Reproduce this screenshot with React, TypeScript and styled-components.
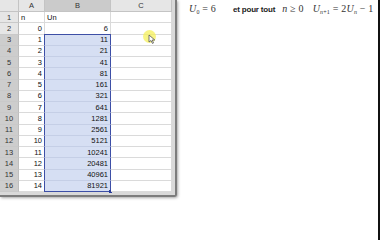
import React from 'react'
import styled, { createGlobalStyle } from 'styled-components'

const GlobalStyle = createGlobalStyle`
  html, body {
    margin: 0;
    padding: 0;
    background: #ffffff;
  }
  body {
    font-family: "Liberation Sans", Arial, sans-serif;
  }
`

const values: number[] = [6, 11, 21, 41, 81, 161, 321, 641, 1281, 2561, 5121, 10241, 20481, 40961, 81921]

const App = () => {
  return (
    <Page>
      <GlobalStyle />
      <Window>
        <Sheet>
          <Corner />
          <ColHead>A</ColHead>
          <ColHead selected>B</ColHead>
          <ColHead>C</ColHead>

          <RowHead>1</RowHead>
          <Cell align="left">n</Cell>
          <Cell align="left">Un</Cell>
          <Cell />

          {values.map((v, i) => {
            const row = i + 2
            const sel = row >= 3
            return (
              <React.Fragment key={row}>
                <RowHead selected={sel}>{row}</RowHead>
                <Cell>{i}</Cell>
                <Cell selected={sel} first={row === 3} last={row === 16}>
                  {v}
                  {row === 16 && <FillHandle />}
                </Cell>
                <Cell />
              </React.Fragment>
            )
          })}
        </Sheet>
        <Highlight>
          <svg width="8" height="10" viewBox="0 0 8 10">
            <path d="M1 1 L1 8 L3 6.5 L4.5 9.5 L5.5 9 L4.2 6 L6.8 6 Z" fill="#fff" stroke="#555" strokeWidth="0.8" />
          </svg>
        </Highlight>
      </Window>

      <Formulas>
        <Math>
          <I>U</I><Sub>0</Sub> = 6
        </Math>
        <Words>et pour tout</Words>
        <Math>
          <I>n</I> ≥ 0
        </Math>
        <Math>
          <I>U</I><Sub><I>n</I>+1</Sub> = 2<I>U</I><Sub><I>n</I></Sub> − 1
        </Math>
      </Formulas>
      <Divider />
      <Edge />
    </Page>
  )
}

export default App

const Page = styled.div`
  display: flex;
  width: 381px;
  height: 240px;
  overflow: hidden;
  background: #fff;
`

const Window = styled.div`
  position: relative;
  flex: none;
  align-self: flex-start;
  background: #d9d9d9;
  padding: 0 3px 3px 0;
  border-right: 2px solid #7c7c7c;
  border-bottom: 2px solid #7c7c7c;
  border-bottom-right-radius: 3px;
  box-shadow: 1px 1px 3px rgba(0, 0, 0, 0.35);
`

const Sheet = styled.div`
  display: grid;
  grid-template-columns: 19px 26px 66px 61px;
  grid-template-rows: 12px repeat(16, 11.25px);
  width: 172px;
  background: #fff;
  font-size: 7.5px;
  color: #111;
`

const Corner = styled.div`
  background: #e6e6e6;
  border-right: 1px solid #c4c4c4;
  border-bottom: 1px solid #c4c4c4;
`

const ColHead = styled.div<{ selected?: boolean }>`
  display: flex;
  align-items: center;
  justify-content: center;
  background: ${p => (p.selected ? '#cbcbcb' : '#e6e6e6')};
  border-right: 1px solid #c4c4c4;
  border-bottom: 1px solid #c4c4c4;
  color: #333;
`

const RowHead = styled.div<{ selected?: boolean }>`
  display: flex;
  align-items: center;
  justify-content: center;
  background: ${p => (p.selected ? '#cdcdcd' : '#e6e6e6')};
  border-right: 1px solid #bdbdbd;
  border-bottom: 1px solid #c9c9c9;
  color: #333;
`

const Cell = styled.div<{ align?: 'left' | 'right'; selected?: boolean; first?: boolean; last?: boolean }>`
  position: relative;
  display: flex;
  align-items: center;
  justify-content: ${p => (p.align === 'left' ? 'flex-start' : 'flex-end')};
  padding: 0 2px;
  box-sizing: border-box;
  background: ${p => (p.selected ? '#d6dff3' : '#fff')};
  border-right: 1px solid ${p => (p.selected ? '#3d4fa6' : '#dadada')};
  border-bottom: 1px solid ${p => (p.selected && !p.last ? '#c5cfe6' : p.last ? '#3d4fa6' : '#dadada')};
  ${p => (p.selected ? 'border-left: 1px solid #3d4fa6;' : '')}
  ${p => (p.first ? 'border-top: 1px solid #3d4fa6;' : '')}
  ${p => (p.first ? 'margin-top: -1px;' : '')}
  ${p => (p.selected ? 'margin-left: -1px;' : '')}
`

const FillHandle = styled.span`
  position: absolute;
  right: -2px;
  bottom: -2px;
  width: 3px;
  height: 3px;
  background: #2a3d9a;
`

const Highlight = styled.div`
  position: absolute;
  left: 143px;
  top: 30px;
  width: 13px;
  height: 13px;
  border-radius: 50%;
  background: rgba(246, 240, 90, 0.75);
  & svg {
    position: absolute;
    left: 5px;
    top: 4px;
  }
`

const Formulas = styled.div`
  flex: 1;
  display: flex;
  align-items: baseline;
  align-self: flex-start;
  padding: 3px 0 0 12px;
  gap: 0;
  font-family: "Liberation Serif", "Times New Roman", serif;
  font-size: 10px;
  color: #333;
  white-space: nowrap;

  & > :nth-child(1) { margin-right: 17px; }
  & > :nth-child(2) { margin-right: 7px; }
  & > :nth-child(3) { margin-right: 9px; }
`

const Math = styled.span`
  letter-spacing: 0.2px;
`

const I = styled.i`
  font-style: italic;
`

const Sub = styled.sub`
  font-size: 6px;
  vertical-align: -2px;
  line-height: 0;
`

const Words = styled.span`
  font-family: "Liberation Sans", Arial, sans-serif;
  font-size: 8px;
  font-weight: bold;
  color: #222;
  letter-spacing: -0.2px;
`

const Divider = styled.div`
  flex: none;
  width: 2px;
  background: #111;
`

const Edge = styled.div`
  flex: none;
  width: 1px;
  background: #fff;
`
